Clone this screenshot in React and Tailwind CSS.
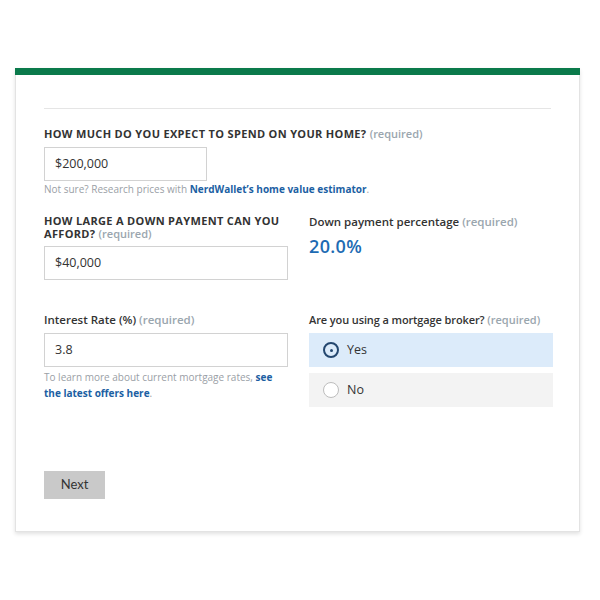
import React from "react";

const Req = () => (
  <span className="font-semibold normal-case tracking-normal text-[#9aa6ae]">(required)</span>
);

export default function App() {
  return (
    <div className="w-[600px] h-[600px] bg-white pt-[68px] pl-[15px] font-['Open_Sans',sans-serif] text-[#333]">
      <div className="w-[565px] h-[464px] bg-white border-x border-b border-[#e3e3e3] shadow-[0_2px_4px_rgba(0,0,0,0.12)]">
        <div className="h-[7px] bg-[#0b7a4b] -mx-px" />
        <div className="px-[28px] pt-[33px]">
          <div className="border-t border-[#e5e5e5]" />

          <div className="mt-[18px] text-[11px] leading-[14px] font-bold uppercase tracking-[0.03em]">
            How much do you expect to spend on your home? <Req />
          </div>
          <div className="mt-[6px] h-[34px] w-[163px] border border-[#d2d2d2] px-[10px] flex items-center text-[12.5px]">
            $200,000
          </div>
          <div className="mt-[2px] text-[10px] leading-[12px] text-[#9aa0a6]">
            Not sure? Research prices with{" "}
            <span className="font-bold text-[#1c5fa3]">NerdWallet’s home value estimator</span>.
          </div>

          <div className="mt-[19px] grid grid-cols-[244px_244px] gap-x-[21px]">
            <div>
              <div className="text-[11px] leading-[13px] font-bold uppercase tracking-[0.03em]">
                <div className="h-[13px]">How large a down payment can you</div>
                <div className="h-[13px]">
                  afford? <Req />
                </div>
              </div>
              <div className="mt-[6px] h-[34px] w-[244px] border border-[#d2d2d2] px-[10px] flex items-center text-[12.5px]">
                $40,000
              </div>
            </div>
            <div>
              <div className="mt-px text-[11.5px] leading-[14px] font-semibold whitespace-nowrap">
                Down payment percentage <Req />
              </div>
              <div className="mt-[6px] text-[18px] leading-[22px] font-semibold text-[#1d6bb3] tracking-[0.02em]">
                20.0%
              </div>
            </div>
          </div>

          <div className="mt-[33px] grid grid-cols-[244px_244px] gap-x-[21px]">
            <div>
              <div className="text-[11.5px] leading-[14px] font-semibold">
                Interest Rate (%) <Req />
              </div>
              <div className="mt-[6px] h-[34px] w-[244px] border border-[#d2d2d2] px-[10px] flex items-center text-[12.5px]">
                3.8
              </div>
              <div className="mt-[2px] text-[10px] leading-[16px] text-[#9aa0a6]">
                To learn more about current mortgage rates,{" "}
                <span className="font-bold text-[#1c5fa3]">see</span>
                <br />
                <span className="font-bold text-[#1c5fa3]">the latest offers here</span>.
              </div>
            </div>
            <div>
              <div className="text-[11px] leading-[14px] font-semibold whitespace-nowrap tracking-[-0.01em]">
                Are you using a mortgage broker? <Req />
              </div>
              <div className="mt-[6px] h-[34px] bg-[#dcebfa] flex items-center pl-[14px] gap-[8px] text-[12.5px]">
                <span className="w-[16px] h-[16px] rounded-full border-2 border-[#24476f] flex items-center justify-center">
                  <span className="w-[3px] h-[3px] rounded-full bg-[#24476f]" />
                </span>
                Yes
              </div>
              <div className="mt-[6px] h-[34px] bg-[#f3f3f3] flex items-center pl-[14px] gap-[8px] text-[12.5px]">
                <span className="w-[16px] h-[16px] rounded-full border border-[#bdbdbd] bg-white" />
                No
              </div>
            </div>
          </div>

          <div className="mt-[64px] w-[61px] h-[28px] bg-[#c9c9c9] flex items-center justify-center text-[13px] text-[#333] font-['Lato',sans-serif]">
            Next
          </div>
        </div>
      </div>
    </div>
  );
}
